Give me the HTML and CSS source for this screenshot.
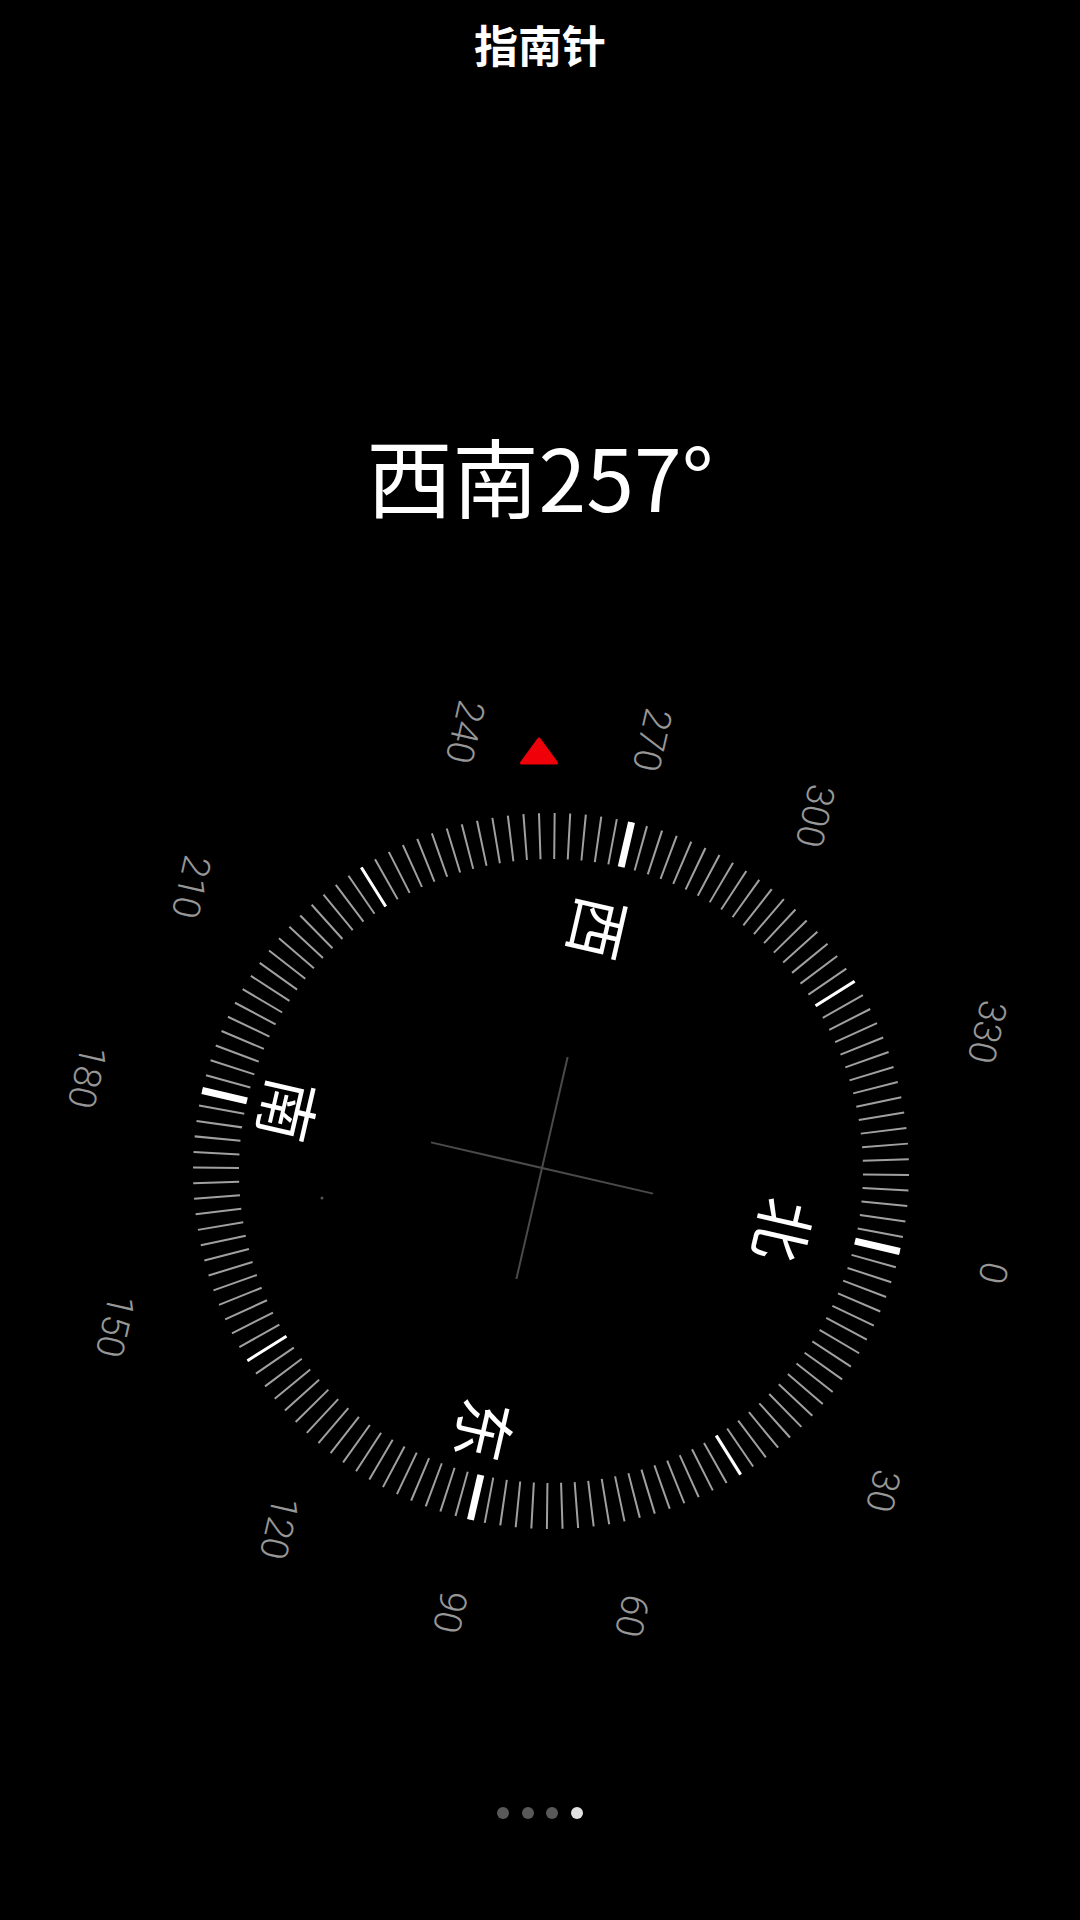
FILE: index.html
```html
<!DOCTYPE html>
<html lang="zh-CN">
<head>
<meta charset="utf-8">
<title>指南针</title>
<link rel="stylesheet" href="styles.css">
</head>
<body>
<div class="screen">
  <div class="title">指南针</div>
  <div class="heading">西南257°</div>
  <svg class="compass" width="1080" height="1120" viewBox="0 0 1080 1120" xmlns="http://www.w3.org/2000/svg">
    <polygon class="pointer" points="539,119 521.5,143 556.5,143"/>
    <g class="cross" transform="translate(542 548) rotate(13)">
      <line x1="-114" y1="0" x2="114" y2="0"/>
      <line x1="0" y1="-114" x2="0" y2="114"/>
    </g>
    <circle class="speck" cx="322" cy="578" r="1.5"/>
    <g transform="translate(551 551) rotate(103)">
      <circle class="ticks" cx="0" cy="0" r="335"/>
      <g class="major">
        <line x1="0" y1="-312" x2="0" y2="-358"/>
        <line x1="312" y1="0" x2="358" y2="0"/>
        <line x1="0" y1="312" x2="0" y2="358"/>
        <line x1="-312" y1="0" x2="-358" y2="0"/>
      </g>
      <g class="minor-major">
        <line x1="220.6" y1="-220.6" x2="253.1" y2="-253.1"/>
        <line x1="220.6" y1="220.6" x2="253.1" y2="253.1"/>
        <line x1="-220.6" y1="220.6" x2="-253.1" y2="253.1"/>
        <line x1="-220.6" y1="-220.6" x2="-253.1" y2="-253.1"/>
      </g>
    </g>
    <g class="labels">
      <g transform="translate(993 653) rotate(103)"><text>0</text></g>
      <g transform="translate(883 871) rotate(103)"><text>30</text></g>
      <g transform="translate(632 996) rotate(103)"><text>60</text></g>
      <g transform="translate(450 992) rotate(103)"><text>90</text></g>
      <g transform="translate(279 908) rotate(103)"><text>120</text></g>
      <g transform="translate(115 706) rotate(103)"><text>150</text></g>
      <g transform="translate(87 457) rotate(103)"><text>180</text></g>
      <g transform="translate(191 267) rotate(103)"><text>210</text></g>
      <g transform="translate(465 112) rotate(103)"><text>240</text></g>
      <g transform="translate(652 120) rotate(103)"><text>270</text></g>
      <g transform="translate(815 196) rotate(103)"><text>300</text></g>
      <g transform="translate(987 412) rotate(103)"><text>330</text></g>
    </g>
    <g class="cardinals">
      <g transform="translate(786 611) rotate(103)"><text>北</text></g>
      <g transform="translate(487 811) rotate(103)"><text>东</text></g>
      <g transform="translate(291 491) rotate(103)"><text>南</text></g>
      <g transform="translate(601 309) rotate(103)"><text>西</text></g>
    </g>
  </svg>
  <div class="dots">
    <span class="dot"></span>
    <span class="dot"></span>
    <span class="dot"></span>
    <span class="dot active"></span>
  </div>
</div>
</body>
</html>
```
FILE: styles.css
```css
html, body {
  margin: 0;
  padding: 0;
  background: #000;
}
body {
  width: 1080px;
  height: 1920px;
  overflow: hidden;
  font-family: "Noto Sans CJK SC", "Noto Sans", sans-serif;
  color: #fff;
}
.screen {
  display: flex;
  flex-direction: column;
  align-items: center;
  width: 1080px;
  height: 1920px;
}
.title {
  height: 88px;
  line-height: 88px;
  font-size: 44px;
  font-weight: 700;
  color: #fff;
}
.heading {
  margin-top: 327px;
  height: 120px;
  line-height: 120px;
  font-size: 86px;
  font-weight: 400;
  color: #fff;
}
.compass {
  display: block;
  margin-top: 85px;
  flex: none;
}
.pointer {
  fill: #f00008;
  stroke: #f00008;
  stroke-width: 3;
  stroke-linejoin: round;
}
.cross line {
  stroke: #4a4a4a;
  stroke-width: 2;
}
.speck {
  fill: #555;
}
.ticks {
  fill: none;
  stroke: #a0a0a0;
  stroke-width: 46;
  stroke-dasharray: 2 12.6171;
  stroke-dashoffset: 1;
}
.major line {
  stroke: #fff;
  stroke-width: 7;
}
.minor-major line {
  stroke: #fff;
  stroke-width: 3;
}
.labels text {
  font-family: Roboto, "Liberation Sans", sans-serif;
  font-weight: 300;
  font-size: 38px;
  fill: #979797;
  text-anchor: middle;
  dominant-baseline: central;
}
.cardinals text {
  font-family: "Noto Sans CJK SC", sans-serif;
  font-weight: 400;
  font-size: 62px;
  fill: #fff;
  text-anchor: middle;
  dominant-baseline: central;
}
.dots {
  margin-top: 67px;
  display: flex;
  gap: 12.5px;
}
.dot {
  width: 12px;
  height: 12px;
  border-radius: 50%;
  background: #595959;
}
.dot.active {
  background: #e2e2e2;
}
```
